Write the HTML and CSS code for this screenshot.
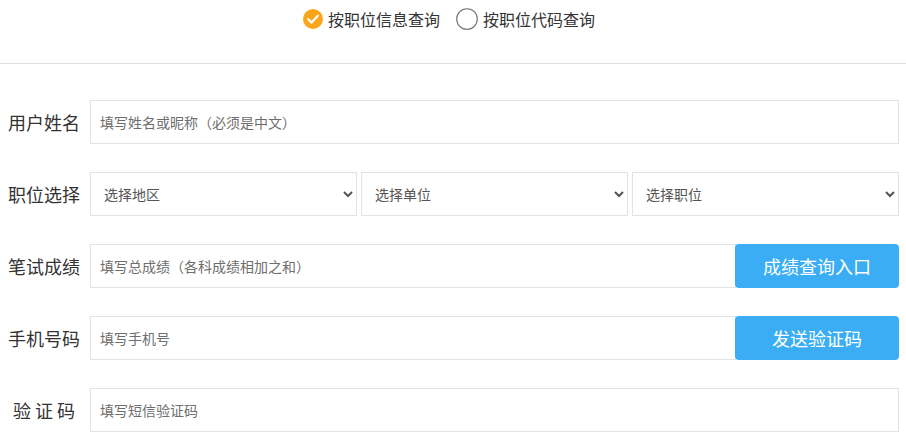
FILE: index.html
```html
<!DOCTYPE html>
<html lang="zh-CN">
<head>
<meta charset="utf-8">
<title>查询</title>
<link rel="stylesheet" href="styles.css">
</head>
<body>
<div class="mode">
  <label class="radio checked"><span class="dot"><svg viewBox="0 0 20 20" width="20" height="20"><circle cx="10" cy="10" r="10" fill="#fba51a"/><path d="M5.2 10.2 L8.6 13.6 L14.8 6.8" fill="none" stroke="#fff" stroke-width="2.2" stroke-linecap="round" stroke-linejoin="round"/></svg></span>按职位信息查询</label>
  <label class="radio"><span class="dot"><svg viewBox="0 0 22 22" width="22" height="22"><circle cx="11" cy="11" r="10.3" fill="#fff" stroke="#6f6f6f" stroke-width="1.1"/></svg></span>按职位代码查询</label>
</div>
<form class="form">
  <div class="row">
    <div class="label">用户姓名</div>
    <input class="field" type="text" placeholder="填写姓名或昵称（必须是中文）">
  </div>
  <div class="row">
    <div class="label">职位选择</div>
    <div class="selects">
      <select class="sel"><option>选择地区</option></select>
      <select class="sel"><option>选择单位</option></select>
      <select class="sel"><option>选择职位</option></select>
    </div>
  </div>
  <div class="row">
    <div class="label">笔试成绩</div>
    <input class="field" type="text" placeholder="填写总成绩（各科成绩相加之和）">
    <button type="button" class="btn">成绩查询入口</button>
  </div>
  <div class="row">
    <div class="label">手机号码</div>
    <input class="field" type="text" placeholder="填写手机号">
    <button type="button" class="btn">发送验证码</button>
  </div>
  <div class="row">
    <div class="label">验 证 码</div>
    <input class="field" type="text" placeholder="填写短信验证码">
  </div>
</form>
</body>
</html>
```
FILE: styles.css
```css
* { box-sizing: border-box; }
body {
  margin: 0;
  background: #fff;
  font-family: "Noto Sans CJK SC", "Noto Sans", sans-serif;
  color: #333;
}
.mode {
  height: 64px;
  padding-top: 8px;
  border-bottom: 1px solid #dedede;
  display: flex;
  justify-content: center;
  gap: 16px;
  padding-right: 8px;
}
.radio {
  display: flex;
  align-items: flex-start;
  gap: 5px;
  font-size: 16px;
  line-height: 22px;
  height: 22px;
  color: #333;
}
.dot { display: flex; align-items: center; height: 22px; }
.form {
  padding: 36px 7px 0 0;
  display: flex;
  flex-direction: column;
  gap: 28px;
}
.row {
  display: flex;
  align-items: center;
  height: 44px;
}
.label {
  width: 90px;
  flex: none;
  text-align: center;
  font-size: 18px;
  color: #333;
  padding-right: 2px;
  white-space: pre;
}
.field {
  flex: 1;
  min-width: 0;
  height: 44px;
  border: 1px solid #e3e3e3;
  border-radius: 0;
  padding: 0 9px;
  font-family: inherit;
  font-size: 14px;
  color: #333;
  outline: none;
}
.field::placeholder { color: #6e6e6e; }
.selects {
  flex: 1;
  display: flex;
  gap: 4px;
}
.sel {
  flex: 1;
  height: 44px;
  border: 1px solid #e3e3e3;
  border-radius: 0;
  background: #fff;
  padding: 0 4px 0 9px;
  font-family: inherit;
  font-size: 14px;
  color: #555;
}
.btn {
  flex: none;
  width: 164px;
  height: 44px;
  margin-left: -1px;
  border: none;
  border-radius: 4px;
  background: #3aadf4;
  color: #fff;
  font-family: inherit;
  font-size: 18px;
}
```
